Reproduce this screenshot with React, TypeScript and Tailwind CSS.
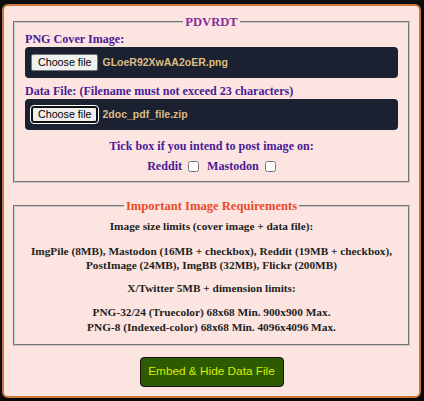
export default function App() {
  const serif = "font-['Liberation_Serif',serif] font-bold";
  return (
    <div className="w-[424px] h-[401px] bg-[#0d0d0d] pt-[4px] pl-[2px]">
      <div className="w-[419px] h-[394px] bg-[#fce5e0] border-2 border-[#c9773d] rounded-[6px] shadow-[2px_2px_4px_rgba(0,0,0,0.8)] px-[9px] pt-[9px]">
        {/* upload section */}
        <fieldset className="border-2 [border-style:groove] border-[#c8c8c8] px-[10px] pb-[8px]">
          <legend className={`mx-auto px-[2px] text-[12.6px] leading-[14px] text-[#8a2c9c] ${serif}`}>PDVRDT</legend>

          <div className={`text-[12.1px] leading-[14px] text-[#4b1a96] mt-[3px] ${serif}`}>PNG Cover Image:</div>
          <div className="mt-[1px] h-[31px] bg-[#1b2130] rounded-[4px] flex items-center px-[6px] gap-[4px]">
            <span className="font-['Liberation_Sans',sans-serif] text-[10.7px] leading-[13px] text-black bg-[#efefef] border border-[#767676] rounded-[2px] px-[6px] py-[1px]">
              Choose file
            </span>
            <span className="font-['Liberation_Sans',sans-serif] font-bold text-[10.5px] text-[#dcbc86]">GLoeR92XwAA2oER.png</span>
          </div>

          <div className={`text-[12.1px] leading-[14px] text-[#4b1a96] mt-[6px] ${serif}`}>
            Data File: (Filename must not exceed 23 characters)
          </div>
          <div className="mt-[1px] h-[31px] bg-[#1b2130] rounded-[4px] flex items-center px-[6px] gap-[4px]">
            <span className="font-['Liberation_Sans',sans-serif] text-[10.7px] leading-[13px] text-black bg-[#efefef] border-2 border-[#101010] outline-1 outline-[#ffffff] rounded-[3px] px-[5px]">
              Choose file
            </span>
            <span className="font-['Liberation_Sans',sans-serif] font-bold text-[10.5px] text-[#dcbc86]">2doc_pdf_file.zip</span>
          </div>

          <div className={`text-center text-[12.1px] leading-[14px] text-[#4b1a96] mt-[9px] ${serif}`}>
            Tick box if you intend to post image on:
          </div>
          <div className={`flex justify-center items-center text-[12.1px] leading-[14px] text-[#4b1a96] mt-[6px] ${serif}`}>
            <span>Reddit</span>
            <input type="checkbox" className="w-[11px] h-[11px] ml-[6px] mr-[8px]" />
            <span>Mastodon</span>
            <input type="checkbox" className="w-[11px] h-[11px] ml-[6px]" />
          </div>
        </fieldset>

        {/* requirements */}
        <fieldset className="mt-[16px] border-2 [border-style:groove] border-[#c8c8c8] px-[8px] pb-[10px]">
          <legend className={`mx-auto px-[2px] text-[12.6px] leading-[14px] text-[#ea4a2a] ${serif}`}>Important Image Requirements</legend>
          <div className={`text-center text-[11.3px] leading-[14.5px] text-[#1e1e1e] mt-[6px] ${serif}`}>
            <p>Image size limits (cover image + data file):</p>
            <p className="mt-[10px]">
              ImgPile (8MB), Mastodon (16MB + checkbox), Reddit (19MB + checkbox),
              <br />
              PostImage (24MB), ImgBB (32MB), Flickr (200MB)
            </p>
            <p className="mt-[8px]">X/Twitter 5MB + dimension limits:</p>
            <p className="mt-[10px]">
              PNG-32/24 (Truecolor) 68x68 Min. 900x900 Max.
              <br />
              PNG-8 (Indexed-color) 68x68 Min. 4096x4096 Max.
            </p>
          </div>
        </fieldset>

        <div className="flex justify-center mt-[11px]">
          <button className="w-[144px] h-[30px] bg-[#2e5a00] text-[#d6f000] border border-[#111] rounded-[4px] font-['Liberation_Sans',sans-serif] text-[11.8px]">
            Embed &amp; Hide Data File
          </button>
        </div>
      </div>
    </div>
  );
}
